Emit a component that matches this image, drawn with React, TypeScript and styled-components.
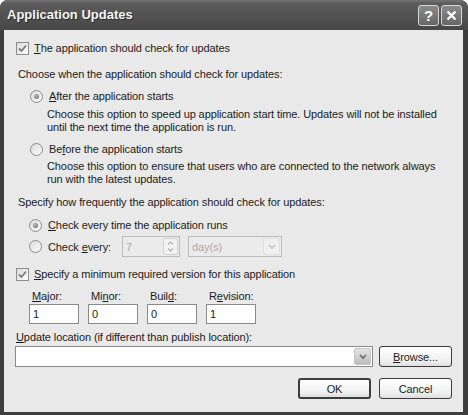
import React from 'react'
import styled, { createGlobalStyle } from 'styled-components'

const GlobalStyle = createGlobalStyle`
  html, body {
    margin: 0;
    padding: 0;
    background: #ffffff;
  }
  body {
    font-family: "Liberation Sans", Arial, sans-serif;
    font-size: 11px;
    letter-spacing: -0.1px;
    color: #1c1c1c;
  }
`

const Window = styled.div`
  width: 468px;
  height: 415px;
  background: #3e3e3e;
  border-radius: 8px 8px 0 0;
  display: flex;
  flex-direction: column;
  overflow: hidden;
`

const TitleBar = styled.div`
  height: 30px;
  flex: none;
  display: flex;
  align-items: center;
  padding: 0 6px 0 7px;
  background: linear-gradient(#747474 0%, #5c5c5c 12%, #505050 60%, #474747 100%);
`

const Title = styled.div`
  flex: 1;
  font-family: "Liberation Sans", Arial, sans-serif;
  font-weight: bold;
  font-size: 13px;
  letter-spacing: 0;
  color: #f4f4f4;
  text-shadow: 1px 1px 0 #2a2a2a;
  padding-bottom: 1px;
`

const CaptionButton = styled.div`
  width: 19px;
  height: 19px;
  margin-left: 2px;
  border: 1px solid #d8d8d8;
  border-radius: 3px;
  background: linear-gradient(#8a8a8a, #666666);
  display: flex;
  align-items: center;
  justify-content: center;
  color: #ffffff;
  font-weight: bold;
  font-size: 15px;
`

const Body = styled.div`
  flex: 1;
  margin: 0 5px 3px 4px;
  background: #e9e9e9;
  padding: 10px 11px 0 11px;
  display: flex;
  flex-direction: column;
`

interface RowProps {
  mt: number
  indent?: number
  h?: number
}

const Row = styled.div<RowProps>`
  display: flex;
  align-items: center;
  margin-top: ${(p) => p.mt}px;
  margin-left: ${(p) => p.indent || 0}px;
  height: ${(p) => p.h || 16}px;
  white-space: nowrap;
`

const Desc = styled.div<RowProps>`
  margin-top: ${(p) => p.mt}px;
  margin-left: ${(p) => p.indent || 0}px;
  line-height: 13px;
`

const Box = styled.div`
  width: 11px;
  height: 11px;
  border: 1px solid #8d8d8d;
  background: linear-gradient(135deg, #dcdcdc, #fbfbfb);
  margin-right: 5px;
  display: flex;
  align-items: center;
  justify-content: center;
`

const Radio = styled.div<{ checked?: boolean }>`
  width: 11px;
  height: 11px;
  border: 1px solid #8d8d8d;
  border-radius: 50%;
  background: linear-gradient(135deg, #dcdcdc, #fbfbfb);
  margin-right: 6px;
  display: flex;
  align-items: center;
  justify-content: center;
  &::after {
    content: '';
    display: ${(p) => (p.checked ? 'block' : 'none')};
    width: 5px;
    height: 5px;
    border-radius: 50%;
    background: radial-gradient(circle at 35% 35%, #b8b8b8, #666666);
  }
`

const Field = styled.div<{ w: number; disabled?: boolean }>`
  width: ${(p) => p.w}px;
  height: 19px;
  border: 1px solid ${(p) => (p.disabled ? '#bdbdbd' : '#8a8a8a')};
  background: ${(p) => (p.disabled ? '#ebebeb' : '#ffffff')};
  color: ${(p) => (p.disabled ? '#a9a9a9' : '#1c1c1c')};
  display: flex;
  align-items: center;
  padding-left: 3px;
  box-sizing: border-box;
`

const FieldText = styled.div`
  flex: 1;
`

const Spin = styled.div`
  width: 15px;
  height: 17px;
  margin-right: 1px;
  border: 1px solid #d2d2d2;
  border-radius: 2px;
  box-sizing: border-box;
  background: #f2f2f2;
  display: flex;
  flex-direction: column;
  align-items: center;
  justify-content: space-around;
`

const DropButton = styled.div<{ disabled?: boolean }>`
  width: 17px;
  height: 17px;
  margin-right: 1px;
  border-radius: 2px;
  box-sizing: border-box;
  border: 1px solid ${(p) => (p.disabled ? '#e0e0e0' : '#c4c4c4')};
  background: ${(p) =>
    p.disabled ? '#f0f0f0' : 'linear-gradient(#e4e4e4, #bcbcbc)'};
  display: flex;
  align-items: center;
  justify-content: center;
`

const VersionGrid = styled.div`
  margin-top: 6px;
  margin-left: 14px;
  display: grid;
  grid-template-columns: repeat(4, 50px);
  column-gap: 9px;
`

const VersionLabel = styled.div`
  height: 16px;
  line-height: 16px;
  padding-left: 3px;
`

const Button = styled.div<{ isDefault?: boolean }>`
  width: 73px;
  height: 21px;
  box-sizing: border-box;
  border: ${(p) => (p.isDefault ? '2px' : '1px')} solid #3c3c3c;
  border-radius: 3px;
  background: linear-gradient(#ffffff, #f1f1f1 70%, #dedede);
  display: flex;
  align-items: center;
  justify-content: center;
  color: #1c1c1c;
`

const ButtonRow = styled.div`
  margin-top: 11px;
  display: flex;
  justify-content: flex-end;
  gap: 8px;
`

const Gap = styled.div<{ w: number }>`
  width: ${(p) => p.w}px;
  flex: none;
`

const Check = () => (
  <svg width="9" height="9" viewBox="0 0 9 9">
    <path d="M1 4.5 L3.5 7 L8 1.5" stroke="#7a7a7a" strokeWidth="1.8" fill="none" />
  </svg>
)

const Chevron = ({ color }: { color: string }) => (
  <svg width="8" height="6" viewBox="0 0 8 6">
    <path d="M1 1 L4 4 L7 1" stroke={color} strokeWidth="1.6" fill="none" />
  </svg>
)

const Arrow = ({ up }: { up?: boolean }) => (
  <svg width="7" height="4" viewBox="0 0 7 4">
    <path d={up ? 'M1 3.5 L3.5 1 L6 3.5' : 'M1 0.5 L3.5 3 L6 0.5'} stroke="#b0b0b0" strokeWidth="1.2" fill="none" />
  </svg>
)

const App: React.FC = () => {
  const versions = [
    { pre: '', key: 'M', post: 'ajor:', value: '1' },
    { pre: 'Mi', key: 'n', post: 'or:', value: '0' },
    { pre: 'Buil', key: 'd', post: ':', value: '0' },
    { pre: 'R', key: 'e', post: 'vision:', value: '1' },
  ]

  return (
    <>
      <GlobalStyle />
      <Window>
        <TitleBar>
          <Title>Application Updates</Title>
          <CaptionButton>?</CaptionButton>
          <CaptionButton>
            <svg width="11" height="11" viewBox="0 0 11 11">
              <path d="M1.5 1.5 L9.5 9.5 M9.5 1.5 L1.5 9.5" stroke="#ffffff" strokeWidth="2.2" />
            </svg>
          </CaptionButton>
        </TitleBar>
        <Body>
          <Row mt={0} indent={1}>
            <Box><Check /></Box>
            <span><u>T</u>he application should check for updates</span>
          </Row>

          <Row mt={10} indent={3}>Choose when the application should check for updates:</Row>

          <Row mt={6} indent={15}>
            <Radio checked />
            <span><u>A</u>fter the application starts</span>
          </Row>
          <Desc mt={4} indent={32}>
            Choose this option to speed up application start time. Updates will not be installed
            <br />
            until the next time the application is run.
          </Desc>

          <Row mt={7} indent={15}>
            <Radio />
            <span>Be<u>f</u>ore the application starts</span>
          </Row>
          <Desc mt={3} indent={32}>
            Choose this option to ensure that users who are connected to the network always
            <br />
            run with the latest updates.
          </Desc>

          <Row mt={8} indent={3}>Specify how frequently the application should check for updates:</Row>

          <Row mt={7} indent={14}>
            <Radio checked />
            <span><u>C</u>heck every time the application runs</span>
          </Row>

          <Row mt={3} indent={14} h={21}>
            <Radio />
            <span>Check <u>e</u>very:</span>
            <Gap w={11} />
            <Field w={58} disabled style={{ height: 21 }}>
              <FieldText>7</FieldText>
              <Spin>
                <Arrow up />
                <Arrow />
              </Spin>
            </Field>
            <Gap w={8} />
            <Field w={94} disabled style={{ height: 21 }}>
              <FieldText>day(s)</FieldText>
              <DropButton disabled><Chevron color="#c4c4c4" /></DropButton>
            </Field>
          </Row>

          <Row mt={9} indent={1}>
            <Box><Check /></Box>
            <span><u>S</u>pecify a minimum required version for this application</span>
          </Row>

          <VersionGrid>
            {versions.map((v) => (
              <VersionLabel key={v.key + v.pre}>
                {v.pre}<u>{v.key}</u>{v.post}
              </VersionLabel>
            ))}
            {versions.map((v) => (
              <Field key={'f' + v.key + v.pre} w={50} style={{ height: 20 }}>
                {v.value}
              </Field>
            ))}
          </VersionGrid>

          <Row mt={5} indent={1}>
            <span><u>U</u>pdate location (if different than publish location):</span>
          </Row>

          <Row mt={1} h={21}>
            <Field w={358} style={{ height: 21 }}>
              <FieldText />
              <DropButton><Chevron color="#6a6a6a" /></DropButton>
            </Field>
            <Gap w={6} />
            <Button><span><u>B</u>rowse...</span></Button>
          </Row>

          <ButtonRow>
            <Button isDefault>OK</Button>
            <Button>Cancel</Button>
          </ButtonRow>
        </Body>
      </Window>
    </>
  )
}

export default App
